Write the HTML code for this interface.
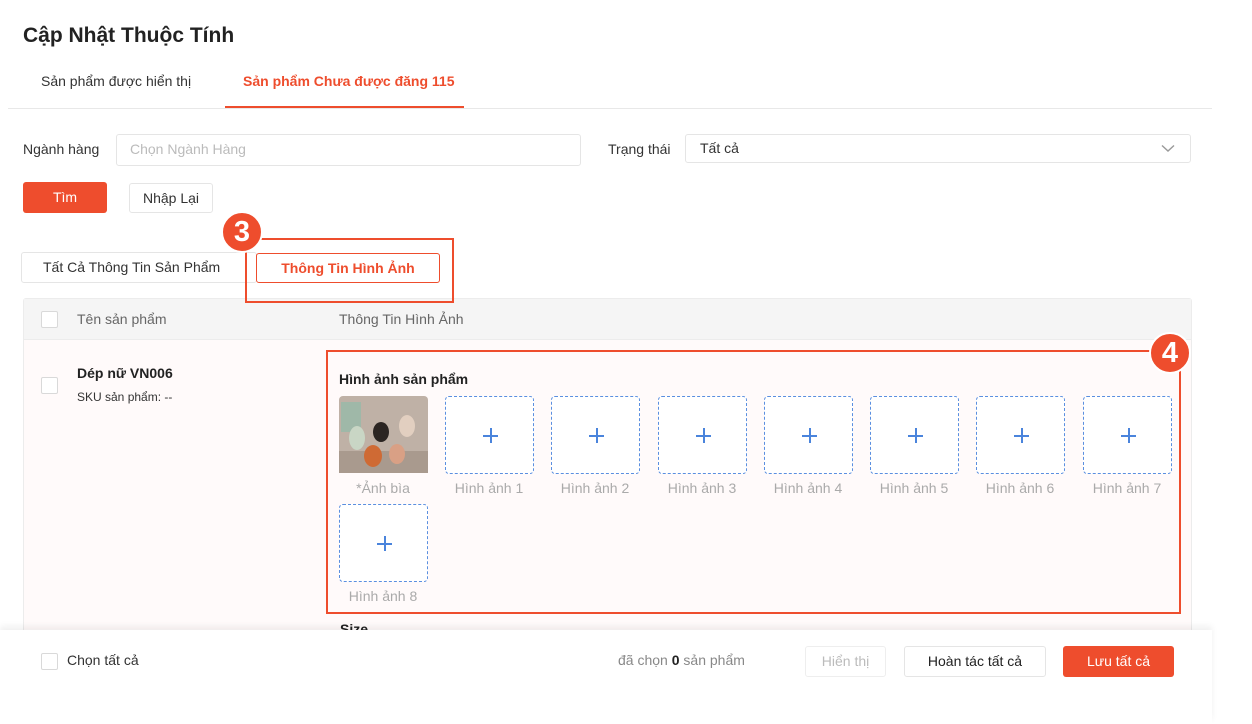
<!DOCTYPE html>
<html><head><meta charset="utf-8"><style>
*{box-sizing:border-box;margin:0;padding:0}
body{width:1252px;height:724px;overflow:hidden;background:#fff;font-family:"Liberation Sans",Arial,sans-serif;color:#333;position:relative}
.a{position:absolute}
.t{white-space:nowrap}
.cb{position:absolute;width:17px;height:17px;border:1px solid #d9d9d9;border-radius:2px;background:#fff}
.ph{position:absolute;width:89px;height:78px;border:1px dashed #5a8fe0;border-radius:4px;background:#fff}
.ph:before{content:"";position:absolute;left:37px;top:38px;width:15px;height:1.5px;background:#4a84dc}
.ph:after{content:"";position:absolute;left:44px;top:31px;width:1.5px;height:15px;background:#4a84dc}
.lb{position:absolute;width:106px;text-align:center;font-size:14px;color:#aaa}
.badge{position:absolute;width:42px;height:42px;border-radius:50%;background:#ee4d2d;border:2px solid #fff;color:#fff;font-weight:bold;font-size:29px;text-align:center;line-height:38px}
.btn{position:absolute;border:1px solid #e5e5e5;border-radius:3px;font-size:14px;text-align:center;background:#fff}
</style></head><body>
<div class="a t" style="left:23px;top:24px;font-size:21px;font-weight:bold;color:#222">Cập Nhật Thuộc Tính</div>
<div class="a t" style="left:41px;top:73px;font-size:14px;color:#333">Sản phẩm được hiển thị</div>
<div class="a t" style="left:243px;top:73px;font-size:14px;font-weight:bold;color:#ee4d2d">Sản phẩm Chưa được đăng 115</div>
<div class="a" style="left:8px;top:108px;width:1204px;height:1px;background:#e8e8e8"></div>
<div class="a" style="left:225px;top:106px;width:239px;height:2px;background:#ee4d2d"></div>

<div class="a t" style="left:23px;top:141px;font-size:14px">Ngành hàng</div>
<div class="a" style="left:116px;top:134px;width:465px;height:32px;border:1px solid #e5e5e5;border-radius:3px"></div>
<div class="a t" style="left:130px;top:141px;font-size:14px;color:#bbb">Chọn Ngành Hàng</div>
<div class="a t" style="left:608px;top:141px;font-size:14px">Trạng thái</div>
<div class="a" style="left:685px;top:134px;width:506px;height:29px;border:1px solid #e5e5e5;border-radius:3px"></div>
<div class="a t" style="left:700px;top:140px;font-size:14px">Tất cả</div>
<svg class="a" style="left:1161px;top:144px" width="14" height="9"><path d="M1 1.5L7 7L13 1.5" fill="none" stroke="#999" stroke-width="1.4"/></svg>

<div class="a" style="left:23px;top:182px;width:84px;height:31px;background:#ee4d2d;border-radius:3px;color:#fff;font-size:14px;text-align:center;line-height:30px">Tìm</div>
<div class="btn" style="left:129px;top:183px;width:84px;height:30px;line-height:28px">Nhập Lại</div>

<div class="btn" style="left:21px;top:252px;width:236px;height:31px;line-height:29px;text-align:left;padding-left:21px">Tất Cả Thông Tin Sản Phẩm</div>
<div class="btn" style="left:256px;top:253px;width:184px;height:30px;line-height:28px;border-color:#ee4d2d;color:#ee4d2d;font-weight:bold">Thông Tin Hình Ảnh</div>

<div class="a" style="left:23px;top:298px;width:1169px;height:340px;border:1px solid #ececec;border-radius:3px;background:#fffafa"></div>
<div class="a" style="left:24px;top:299px;width:1167px;height:41px;background:#f5f5f5;border-bottom:1px solid #ececec"></div>
<div class="a" style="left:245px;top:238px;width:209px;height:65px;border:2px solid #ee4d2d"></div>
<div class="badge" style="left:221px;top:211px">3</div>
<div class="cb" style="left:41px;top:311px"></div>
<div class="a t" style="left:77px;top:311px;font-size:14px;color:#666">Tên sản phẩm</div>
<div class="a t" style="left:339px;top:311px;font-size:14px;color:#666">Thông Tin Hình Ảnh</div>
<div class="cb" style="left:41px;top:377px"></div>
<div class="a t" style="left:77px;top:365px;font-size:14px;font-weight:bold;color:#222">Dép nữ VN006</div>
<div class="a t" style="left:77px;top:390px;font-size:12px;color:#333">SKU sản phẩm: --</div>

<div class="a" style="left:326px;top:350px;width:855px;height:264px;border:2px solid #ee4d2d"></div>
<div class="a t" style="left:339px;top:371px;font-size:14px;font-weight:bold;color:#222">Hình ảnh sản phẩm</div>
<svg class="a" style="left:339px;top:396px" width="89" height="77">
<rect width="89" height="77" rx="4" fill="#bfb1a6"/>
<rect x="0" y="55" width="89" height="22" fill="#a99a8e"/>
<rect x="2" y="6" width="20" height="30" fill="#9fb8a8"/>
<ellipse cx="18" cy="42" rx="8" ry="12" fill="#c9d6c5"/>
<ellipse cx="42" cy="36" rx="8" ry="10" fill="#2b2522"/>
<ellipse cx="68" cy="30" rx="8" ry="11" fill="#e2cfc0"/>
<ellipse cx="34" cy="60" rx="9" ry="11" fill="#cf6a34"/>
<ellipse cx="58" cy="58" rx="8" ry="10" fill="#d9a085"/>
</svg>
<div class="lb" style="left:330px;top:480px">*Ảnh bìa</div>
<div class="ph" style="left:445px;top:396px"></div><div class="lb" style="left:436px;top:480px">Hình ảnh 1</div>
<div class="ph" style="left:551px;top:396px"></div><div class="lb" style="left:542px;top:480px">Hình ảnh 2</div>
<div class="ph" style="left:658px;top:396px"></div><div class="lb" style="left:649px;top:480px">Hình ảnh 3</div>
<div class="ph" style="left:764px;top:396px"></div><div class="lb" style="left:755px;top:480px">Hình ảnh 4</div>
<div class="ph" style="left:870px;top:396px"></div><div class="lb" style="left:861px;top:480px">Hình ảnh 5</div>
<div class="ph" style="left:976px;top:396px"></div><div class="lb" style="left:967px;top:480px">Hình ảnh 6</div>
<div class="ph" style="left:1083px;top:396px"></div><div class="lb" style="left:1074px;top:480px">Hình ảnh 7</div>
<div class="ph" style="left:339px;top:504px"></div><div class="lb" style="left:330px;top:588px">Hình ảnh 8</div>
<div class="badge" style="left:1149px;top:332px">4</div>
<div class="a t" style="left:340px;top:621px;font-size:14px;font-weight:bold;color:#222">Size</div>

<div class="a" style="left:0;top:630px;width:1212px;height:94px;background:#fff;box-shadow:0 -4px 6px rgba(0,0,0,0.06)"></div>
<div class="cb" style="left:41px;top:653px"></div>
<div class="a t" style="left:67px;top:652px;font-size:14px">Chọn tất cả</div>
<div class="a t" style="left:618px;top:652px;font-size:14px;color:#888">đã chọn <b style="color:#222">0</b> sản phẩm</div>
<div class="btn" style="left:805px;top:646px;width:81px;height:31px;line-height:29px;color:#bbb;border-color:#eee">Hiển thị</div>
<div class="btn" style="left:904px;top:646px;width:142px;height:31px;line-height:29px;color:#222">Hoàn tác tất cả</div>
<div class="a" style="left:1063px;top:646px;width:111px;height:31px;background:#ee4d2d;border-radius:3px;color:#fff;font-size:14px;text-align:center;line-height:30px">Lưu tất cả</div>
</body></html>
